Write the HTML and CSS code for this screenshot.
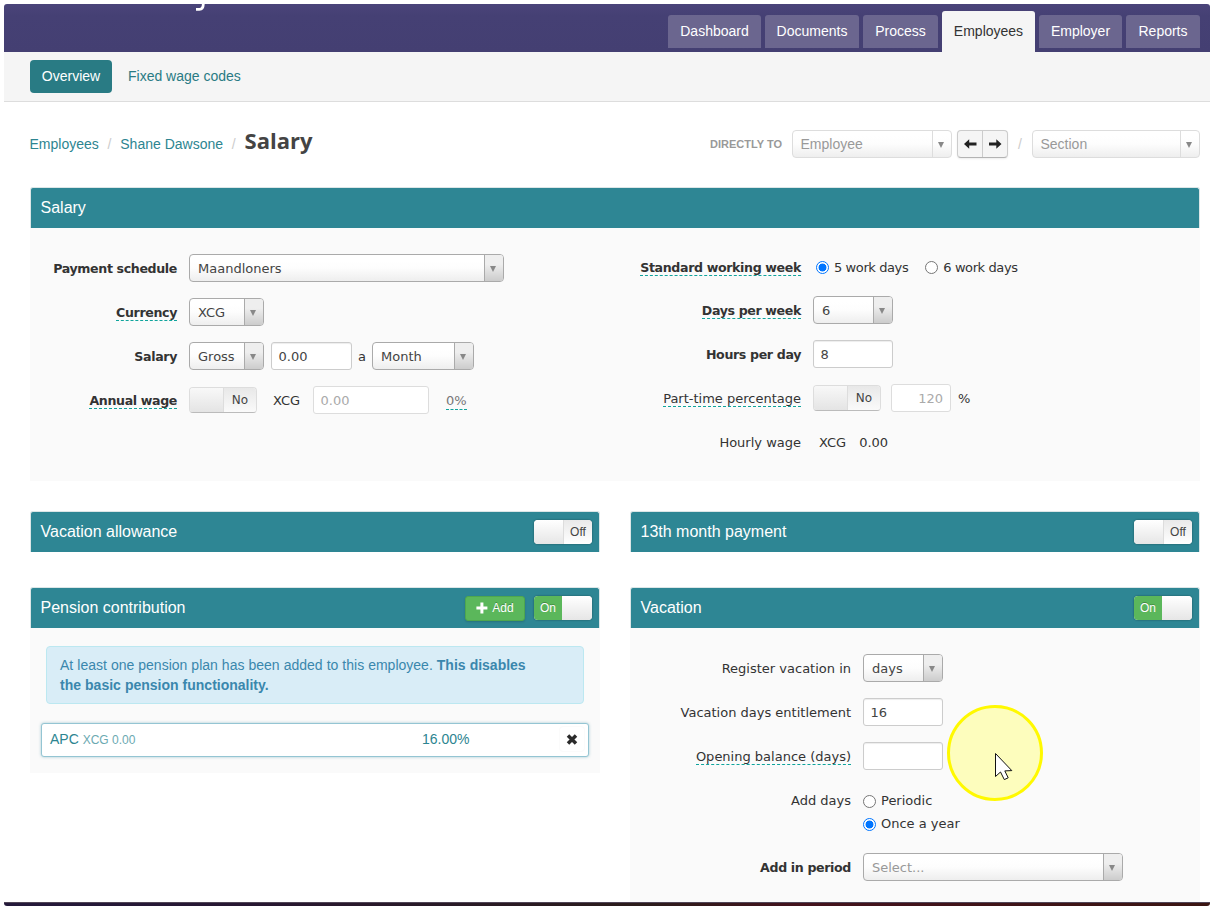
FILE: index.html
```html
<!DOCTYPE html>
<html lang="en">
<head>
<meta charset="utf-8">
<title>Salary</title>
<link rel="stylesheet" href="styles.css">
</head>
<body>
<div class="window">
  <header class="topbar">
    <svg class="brand" width="14" height="8" viewBox="0 0 14 8"><path d="M4 5.4H7.4Q11.2 5.4 11.3 0" fill="none" stroke="#fff" stroke-width="2.8"/></svg>
    <nav class="tabs">
      <a class="tab t-dashboard">Dashboard</a>
      <a class="tab t-documents">Documents</a>
      <a class="tab t-process">Process</a>
      <a class="tab t-employees active">Employees</a>
      <a class="tab t-employer">Employer</a>
      <a class="tab t-reports">Reports</a>
    </nav>
  </header>
  <nav class="subnav">
    <a class="pill">Overview</a>
    <a class="sublink">Fixed wage codes</a>
  </nav>
  <main class="content">
    <div class="titlebar">
      <div class="crumbs"><a>Employees</a><i>/</i><a>Shane Dawsone</a><i>/</i><h1>Salary</h1></div>
      <div class="jump">
        <span class="jump-label">DIRECTLY TO</span>
        <span class="select light w160"><span class="value">Employee</span><span class="arrow"></span></span>
        <span class="pager">
          <span class="pg"><svg width="13" height="10" viewBox="0 0 13 10"><path d="M0 5 5.2 0.2V3.4H12.5V6.6H5.2V9.8Z" fill="#222"/></svg></span>
          <span class="pg"><svg width="13" height="10" viewBox="0 0 13 10"><path d="M12.5 5 7.3 0.2V3.4H0V6.6H7.3V9.8Z" fill="#222"/></svg></span>
        </span>
        <i class="sep">/</i>
        <span class="select light w168"><span class="value">Section</span><span class="arrow"></span></span>
      </div>
    </div>

    <section class="panel salary">
      <div class="panel-head"><h2>Salary</h2></div>
      <div class="panel-body two">
        <div class="form left">
          <div class="row"><label class="b">Payment schedule</label><span class="select w315"><span class="value">Maandloners</span><span class="arrow"></span></span></div>
          <div class="row"><label class="b"><span class="hint">Currency</span></label><span class="select w75"><span class="value">XCG</span><span class="arrow"></span></span></div>
          <div class="row"><label class="b">Salary</label><span class="select w75"><span class="value">Gross</span><span class="arrow"></span></span><span class="input amount">0.00</span><span class="per">a</span><span class="select w102"><span class="value">Month</span><span class="arrow"></span></span></div>
          <div class="row"><label class="b"><span class="hint">Annual wage</span></label><span class="yesno"><span class="knob"></span><span class="state">No</span></span><span class="cur">XCG</span><span class="input disabled annual">0.00</span><span class="hint pct">0%</span></div>
        </div>
        <div class="form right">
          <div class="row short"><label class="b"><span class="hint">Standard working week</span></label><span class="radio on r-week"></span><span class="opt">5 work days</span><span class="radio r-second"></span><span class="opt">6 work days</span></div>
          <div class="row"><label class="b"><span class="hint">Days per week</span></label><span class="select w80"><span class="value">6</span><span class="arrow"></span></span></div>
          <div class="row"><label class="b">Hours per day</label><span class="input w80">8</span></div>
          <div class="row"><label><span class="hint">Part-time percentage</span></label><span class="yesno"><span class="knob"></span><span class="state">No</span></span><span class="input disabled part">120</span><span class="unit">%</span></div>
          <div class="row"><label>Hourly wage</label><span class="wage"><span>XCG</span><span>0.00</span></span></div>
        </div>
      </div>
    </section>

    <div class="pair first">
      <section class="panel"><div class="panel-head"><h2>Vacation allowance</h2><span class="switch off"><span class="knob"></span><span class="state">Off</span></span></div></section>
      <section class="panel"><div class="panel-head"><h2>13th month payment</h2><span class="switch off"><span class="knob"></span><span class="state">Off</span></span></div></section>
    </div>

    <div class="pair second">
      <section class="panel">
        <div class="panel-head"><h2>Pension contribution</h2>
          <span class="add"><svg width="12" height="12" viewBox="0 0 12 12"><path d="M4.4 .5h3v3.9h4v3h-4v4h-3v-4h-4v-3h4z" fill="#fff"/></svg>Add</span>
          <span class="switch on"><span class="state">On</span><span class="knob"></span></span>
        </div>
        <div class="panel-body pension">
          <p class="alert">At least one pension plan has been added to this employee. <b>This disables<br>the basic pension functionality.</b></p>
          <div class="plan"><span class="plan-name">APC <small>XCG 0.00</small></span><span class="plan-rate">16.00%</span><span class="remove"><svg width="12" height="11" viewBox="0 0 12 11"><path d="M2 1.5 10 9.5M10 1.5 2 9.5" stroke="#2b2b2b" stroke-width="3.5" fill="none"/></svg></span></div>
        </div>
      </section>
      <section class="panel">
        <div class="panel-head"><h2>Vacation</h2><span class="switch on"><span class="state">On</span><span class="knob"></span></span></div>
        <div class="panel-body form vacation">
          <div class="row"><label>Register vacation in</label><span class="select w80"><span class="value">days</span><span class="arrow"></span></span></div>
          <div class="row"><label>Vacation days entitlement</label><span class="input w80">16</span></div>
          <div class="row"><label><span class="hint">Opening balance (days)</span></label><span class="input w80"></span></div>
          <div class="row tall"><label>Add days</label><span class="stack"><span class="choice"><span class="radio"></span><span class="opt">Periodic</span></span><span class="choice"><span class="radio on"></span><span class="opt">Once a year</span></span></span></div>
          <div class="row"><label class="b">Add in period</label><span class="select w260"><span class="value faint">Select...</span><span class="arrow"></span></span></div>
        </div>
      </section>
    </div>
  </main>
  <div class="desktop-edge"></div>
</div>
<div class="spotlight"></div>
<svg class="pointer" width="20" height="30" viewBox="0 0 20 30"><path d="M1.5 1.5V24.5L6.5 20 10.3 27.6 14.2 25.8 10.8 18.9 17.8 18.6Z" fill="#fff" stroke="#111" stroke-width="1"/></svg>
</body>
</html>
```
FILE: styles.css
```css
* { box-sizing: border-box; }
body { margin: 0; padding: 4px; height: 910px; overflow: hidden; background: #fff; font: 14px/20px "Liberation Sans", Arial, sans-serif; color: #333; }
h1, h2, p { margin: 0; }
i { font-style: normal; }
svg { display: block; }

.window { display: flex; flex-direction: column; width: 1206px; height: 902px; overflow: hidden; border-radius: 3px; }
.topbar { display: flex; flex: none; justify-content: space-between; align-items: flex-start; height: 48px; padding: 0 10px 0 188px; background: linear-gradient(#4a447a, #454074 12px, #443f72); }
.tabs { display: flex; gap: 4px; padding-top: 7px; }
.tab { height: 33px; margin-top: 4px; border-radius: 3px 3px 0 0; background: #6b668f; color: #fff; line-height: 32px; text-align: center; }
.tab.active { height: 41px; margin-top: 0; background: #f5f5f5; color: #333; line-height: 40px; }
.t-dashboard { width: 93px; }
.t-documents { width: 94px; }
.t-process { width: 75px; }
.t-employees { width: 93px; }
.t-employer { width: 83px; }
.t-reports { width: 74px; }

.subnav { display: flex; flex: none; gap: 16px; height: 50px; padding: 8px 26px; border-bottom: 1px solid #ddd; background: #f5f5f5; line-height: 32px; }
.pill { width: 82px; height: 33px; border-radius: 4px; background: #297b84; color: #fff; text-align: center; }
.sublink { color: #297b84; }

.content { display: flex; flex: none; flex-direction: column; height: 800px; overflow: hidden; padding: 28px 10px 0 26px; }
.content > * { flex: none; }
.titlebar { display: flex; justify-content: space-between; height: 57px; }
.crumbs { display: flex; height: 28px; line-height: 28px; color: #2d8591; margin-left: -.5px; }
.crumbs i { width: 21.5px; color: #ccc; text-align: center; }
.crumbs h1 { font: bold 22px/24px "Open Sans", sans-serif; margin-top: -2px; color: #444; }
.jump { display: flex; align-items: center; height: 28px; }
.jump-label { margin-right: 10px; color: #999; font-size: 11px; font-weight: bold; }
.sep { width: 24px; color: #ccc; text-align: center; }
.pager { display: flex; width: 51px; height: 28px; margin-left: 5px; border: 1px solid #ccc; border-bottom-color: #b3b3b3; border-radius: 4px; background: #f5f5f5; box-shadow: 0 1px 2px rgba(0,0,0,.08); }
.pg { display: flex; flex: 1; align-items: center; justify-content: center; }
.pg + .pg { border-left: 1px solid #ccc; }

.panel-head { display: flex; align-items: center; height: 41px; padding: 0 7px 0 9px; border: 1px solid #dce6e7; border-width: 1px 1px 0; border-radius: 3px 3px 0 0; background: #2e8694; color: #fff; }
.panel-head h2 { flex: 1; height: 40px; padding-left: .5px; font-size: 16px; font-weight: normal; line-height: 39px; }
.panel-body { background: #fafafa; }
.two { display: flex; height: 253px; padding-top: 26px; }
.pair { display: grid; grid-template-columns: 570px 570px; gap: 30px; align-items: start; }
.first { margin-top: 30px; }
.second { margin-top: 35px; }

.form { font: 13px/20px "DejaVu Sans", Verdana, sans-serif; }
.left, .right { display: flex; flex-direction: column; gap: 16px; }
.left { width: 600px; }
.row { display: flex; align-items: center; height: 28px; }
.row.short { height: 26px; }
.row label { flex: none; margin-right: 12px; padding-top: 2px; text-align: right; }
.left label { width: 147px; }
.right label { width: 171px; }
.vacation label { width: 221px; }
.b { font-weight: bold; font-size: 12.6px; letter-spacing: -.36px; }
.hint { border-bottom: 1px dashed #0fa49c; line-height: 15px; }

.select { display: flex; flex: none; height: 28px; overflow: hidden; border: 1px solid #aaa; border-radius: 4px; background: linear-gradient(#fff 20%, #fdfdfd 50%, #eee); color: #444; line-height: 27px; }
.value { flex: 1; padding-left: 8px; }
.faint { color: #999; }
.arrow { display: flex; width: 19px; align-items: center; justify-content: center; border-left: 1px solid #aaa; background: linear-gradient(#eee 35%, #ccc); }
.arrow::after { content: ""; margin: 1px 2px 0 0; border: 3.5px solid transparent; border-top: 6px solid #888; border-bottom: 0; }
.light { border-color: #ddd; color: #999; }
.light .value { padding-left: 7.5px; }
.light .arrow { border-color: #ddd; background: none; }
.w75 { width: 75px; }
.w80 { width: 80px; }
.w102 { width: 102px; }
.w160 { width: 160px; }
.w168 { width: 168px; }
.w260 { width: 260px; }
.w315 { width: 315px; }
.input { flex: none; height: 28px; padding-left: 6.5px; border: 1px solid #ccc; border-radius: 3px; background: #fff; box-shadow: inset 0 1px 1px rgba(0,0,0,.075); color: #444; line-height: 27px; }
.disabled { border-color: #ddd; box-shadow: none; color: #aaa; }
.amount { width: 81px; margin-left: 7px; }
.per { width: 20px; padding: 1px 0 0 6px; }
.cur { width: 56px; padding: 2px 0 0 16px; }
.annual { width: 116px; }
.pct { margin: 2px 0 0 17px; color: #777; line-height: 17px; }
.part { width: 60px; margin-left: 10px; padding: 0 7px 0 0; text-align: right; }
.unit { margin-left: 7px; padding-top: 2px; }
.wage { display: flex; gap: 13px; padding: 2px 0 0 6px; }
.yesno { display: flex; flex: none; width: 68px; height: 26px; border: 1px solid #ddd; border-bottom-color: #bbb; border-radius: 4px; overflow: hidden; }
.yesno .knob { width: 34px; border-right: 1px solid #ddd; background: linear-gradient(#f8f8f8, #e4e4e4); }
.yesno .state { flex: 1; background: linear-gradient(#e8e8e8, #fafafa); color: #444; font-size: 12px; line-height: 24px; text-align: center; }
.radio { flex: none; width: 13px; height: 13px; border: 1px solid #767676; border-radius: 50%; background: #fff; }
.radio.on { border-color: #0075ff; background: radial-gradient(circle, #0075ff 3.6px, #fff 4.3px); }
.r-week { margin-left: 3px; }
.r-second { margin-left: 17px; }
.opt { margin-left: 5px; }
.short .opt { padding-top: 1px; letter-spacing: -.4px; }

.switch { display: flex; width: 58px; height: 24px; overflow: hidden; border-radius: 4px; background: #fff; box-shadow: 0 0 2px rgba(0,0,0,.45); font-size: 12px; line-height: 24px; text-align: center; }
.switch .knob { width: 30px; background: linear-gradient(#fff, #e6e6e6); }
.switch .state { width: 28px; }
.off .knob { border-right: 1px solid #ddd; }
.off .state { background: linear-gradient(#e9e9e9, #fff); color: #444; }
.on .state { background: #5bb75b; color: #fff; text-shadow: 0 -1px 0 rgba(0,0,0,.25); }
.add { display: flex; align-items: center; justify-content: center; gap: 4px; width: 60px; height: 25px; margin-right: 9px; border: 1px solid #4ea64e; border-radius: 3px; background: #5bb75b; box-shadow: 0 1px 2px rgba(0,0,0,.15); font-size: 12px; text-shadow: 0 -1px 0 rgba(0,0,0,.25); }

.pension { height: 145px; padding: 18px 11px 0; }
.alert { height: 58px; margin: 0 5px 19px; padding: 8px 13px; border: 1px solid #bce8f1; border-radius: 4px; background: #d9edf7; color: #3a87ad; word-spacing: .15px; }
.plan { display: flex; align-items: center; height: 34px; padding: 0 4px 2px 8px; border: 1px solid #94c5d3; border-radius: 3px; background: #fff; box-shadow: 0 0 3px rgba(60,140,160,.45); color: #2d8591; }
.plan-name { width: 372px; }
.plan small { color: #6ba9b1; font-size: 12px; }
.plan-rate { flex: 1; }
.remove { display: flex; align-items: center; justify-content: center; width: 24px; height: 24px; border-radius: 3px; background: #fff; box-shadow: 0 0 2px #eee; }

.vacation { display: flex; flex-direction: column; gap: 16px; height: 285px; padding-top: 26px; }
.row.tall { align-items: flex-start; height: 51px; }
.tall label { padding-top: 5px; }
.stack { display: flex; flex-direction: column; gap: 3px; padding-top: 5px; }
.choice { display: flex; align-items: center; height: 20px; }

.desktop-edge { height: 4px; flex: none; border-top: 1px solid #514657; background: linear-gradient(90deg, #24193b, #271732 20%, #2b1c1b 53%, #44121d 66%, #3b1512); }
.spotlight { position: absolute; left: 947px; top: 705px; width: 96px; height: 96px; border: 3px solid #fff900; border-radius: 50%; background: rgba(255,255,128,.5); }
.pointer { position: absolute; left: 994px; top: 752px; }
```
